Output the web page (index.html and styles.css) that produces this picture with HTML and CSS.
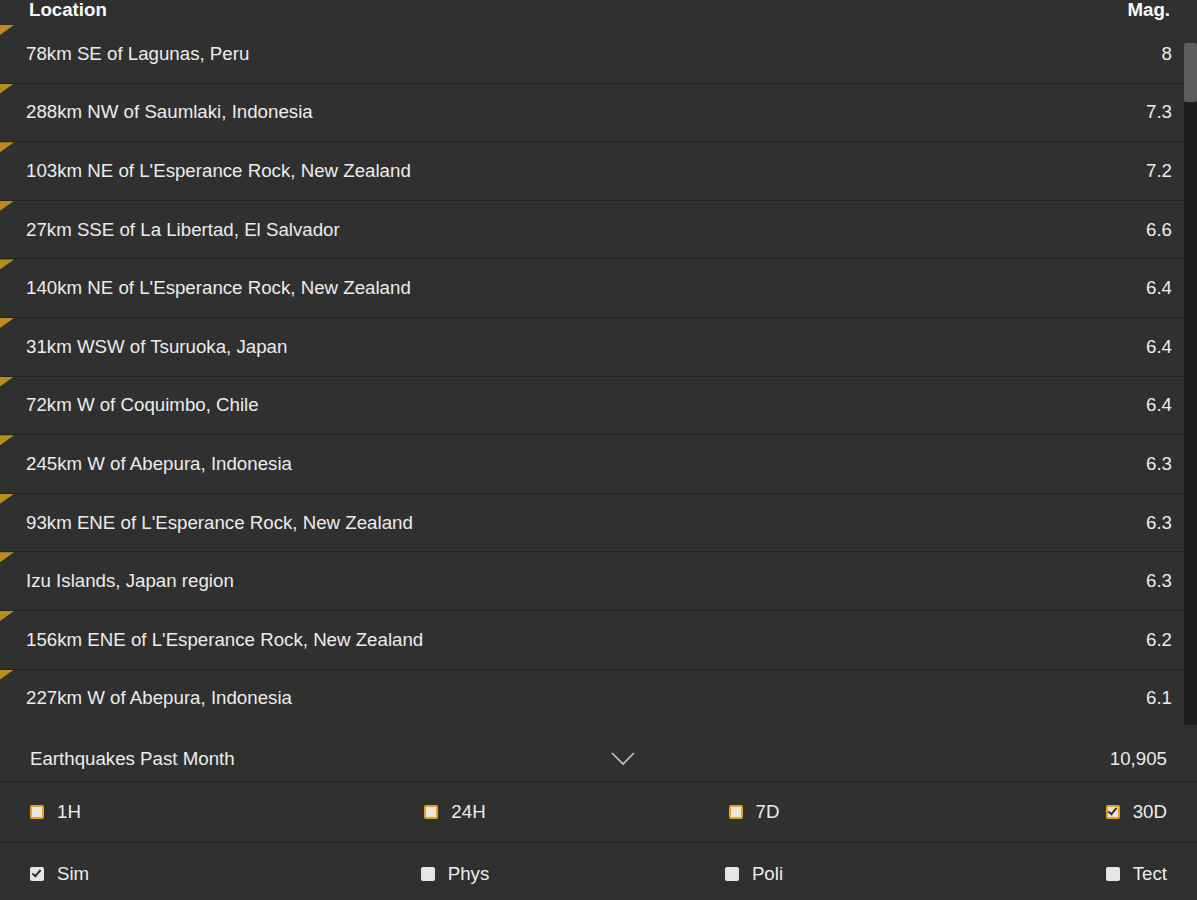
FILE: index.html
```html
<!DOCTYPE html>
<html lang="en">
<head>
    <meta charset="UTF-8">
    <meta name="viewport" content="width=device-width, initial-scale=1.0">
    <title>Earthquakes</title>
    <link rel="stylesheet" href="styles.css">
</head>
<body>
    <!-- QUAKE LIST -->
    <div class="list-wrap">
        <div class="list">
            <div class="list-head">
                <span>Location</span>
                <span>Mag.</span>
            </div>
            <div class="quake"><span>78km SE of Lagunas, Peru</span><span>8</span></div>
            <div class="quake"><span>288km NW of Saumlaki, Indonesia</span><span>7.3</span></div>
            <div class="quake"><span>103km NE of L'Esperance Rock, New Zealand</span><span>7.2</span></div>
            <div class="quake"><span>27km SSE of La Libertad, El Salvador</span><span>6.6</span></div>
            <div class="quake"><span>140km NE of L'Esperance Rock, New Zealand</span><span>6.4</span></div>
            <div class="quake"><span>31km WSW of Tsuruoka, Japan</span><span>6.4</span></div>
            <div class="quake"><span>72km W of Coquimbo, Chile</span><span>6.4</span></div>
            <div class="quake"><span>245km W of Abepura, Indonesia</span><span>6.3</span></div>
            <div class="quake"><span>93km ENE of L'Esperance Rock, New Zealand</span><span>6.3</span></div>
            <div class="quake"><span>Izu Islands, Japan region</span><span>6.3</span></div>
            <div class="quake"><span>156km ENE of L'Esperance Rock, New Zealand</span><span>6.2</span></div>
            <div class="quake last"><span>227km W of Abepura, Indonesia</span><span>6.1</span></div>
        </div>
        <div class="scroll-track">
            <div class="scroll-thumb"></div>
        </div>
    </div>

    <!-- SUMMARY -->
    <div class="summary">
        <span>Earthquakes Past Month</span>
        <svg class="chevron" width="24" height="14" viewBox="0 0 24 14">
            <polyline points="1,1 12,12 23,1" fill="none" stroke="#c8c8c8" stroke-width="1.6"/>
        </svg>
        <span class="count">10,905</span>
    </div>

    <!-- FILTERS -->
    <div class="filters">
        <label class="opt"><span class="box gold"></span>1H</label>
        <label class="opt"><span class="box gold"></span>24H</label>
        <label class="opt"><span class="box gold"></span>7D</label>
        <label class="opt"><span class="box gold checked"></span>30D</label>
    </div>
    <div class="filters last">
        <label class="opt"><span class="box checked"></span>Sim</label>
        <label class="opt"><span class="box"></span>Phys</label>
        <label class="opt"><span class="box"></span>Poli</label>
        <label class="opt"><span class="box"></span>Tect</label>
    </div>
</body>
</html>
```

FILE: styles.css
```css
/* === GENERAL === */
body {
    margin: 0;
    background-color: #303030;
    color: #ececec;
    font-family: 'Liberation Sans', Arial, sans-serif;
    font-size: 18.7px;
    overflow: hidden;
}

/* === LIST === */
.list-wrap {
    display: flex;
    height: 727px;
}

.list {
    flex: 1;
}

.list-head {
    display: flex;
    justify-content: space-between;
    height: 25px;
    padding: 0 14px 0 29px;
    font-weight: bold;
    line-height: 19px;
    color: #fafafa;
}

.quake {
    position: relative;
    display: flex;
    justify-content: space-between;
    align-items: center;
    height: 57.6px;
    padding: 0 12px 0 26px;
    border-bottom: 1px solid #242424;
}

.quake.last {
    border-bottom: none;
}

.quake::before {
    content: '';
    position: absolute;
    top: 0;
    left: 0;
    width: 14px;
    height: 10px;
    background-color: #b98d1c;
    clip-path: polygon(0 0, 100% 0, 0 100%);
}

.scroll-track {
    width: 13px;
    margin-top: 43px;
    margin-bottom: 2px;
    background-color: #1c1c1c;
}

.scroll-thumb {
    height: 59px;
    border-radius: 2px;
    background-color: #5c5c5c;
}

/* === SUMMARY === */
.summary {
    display: grid;
    grid-template-columns: 1fr auto 1fr;
    align-items: center;
    box-sizing: border-box;
    height: 55px;
    padding: 10px 30px 0 30px;
    border-bottom: 1px solid #242424;
}

.chevron {
    margin-left: 48px;
}

.count {
    text-align: right;
}

/* === FILTERS === */
.filters {
    display: grid;
    grid-template-columns: repeat(4, 1fr);
    column-gap: 59px;
    align-items: center;
    box-sizing: border-box;
    height: 61px;
    padding: 0 30px 0 30px;
    border-bottom: 1px solid #242424;
}

.filters.last {
    border-bottom: none;
}

.opt {
    display: flex;
    align-items: center;
    gap: 13px;
}

.opt:nth-child(2),
.opt:nth-child(3) {
    justify-self: center;
    margin-left: 12px;
}

.opt:nth-child(4) {
    justify-self: end;
}

.box {
    display: inline-block;
    box-sizing: border-box;
    width: 14px;
    height: 14px;
    border-radius: 2px;
    background-color: #e6e6e6;
    position: relative;
}

.box.gold {
    border: 2px solid #e3a21a;
    background-color: #ece6dc;
}

.box.checked::after {
    content: '';
    position: absolute;
    left: 4px;
    top: 1px;
    width: 3px;
    height: 7px;
    border: solid #333;
    border-width: 0 2px 2px 0;
    transform: rotate(40deg);
}

.box.gold.checked::after {
    left: 2px;
    top: -1px;
}
```
